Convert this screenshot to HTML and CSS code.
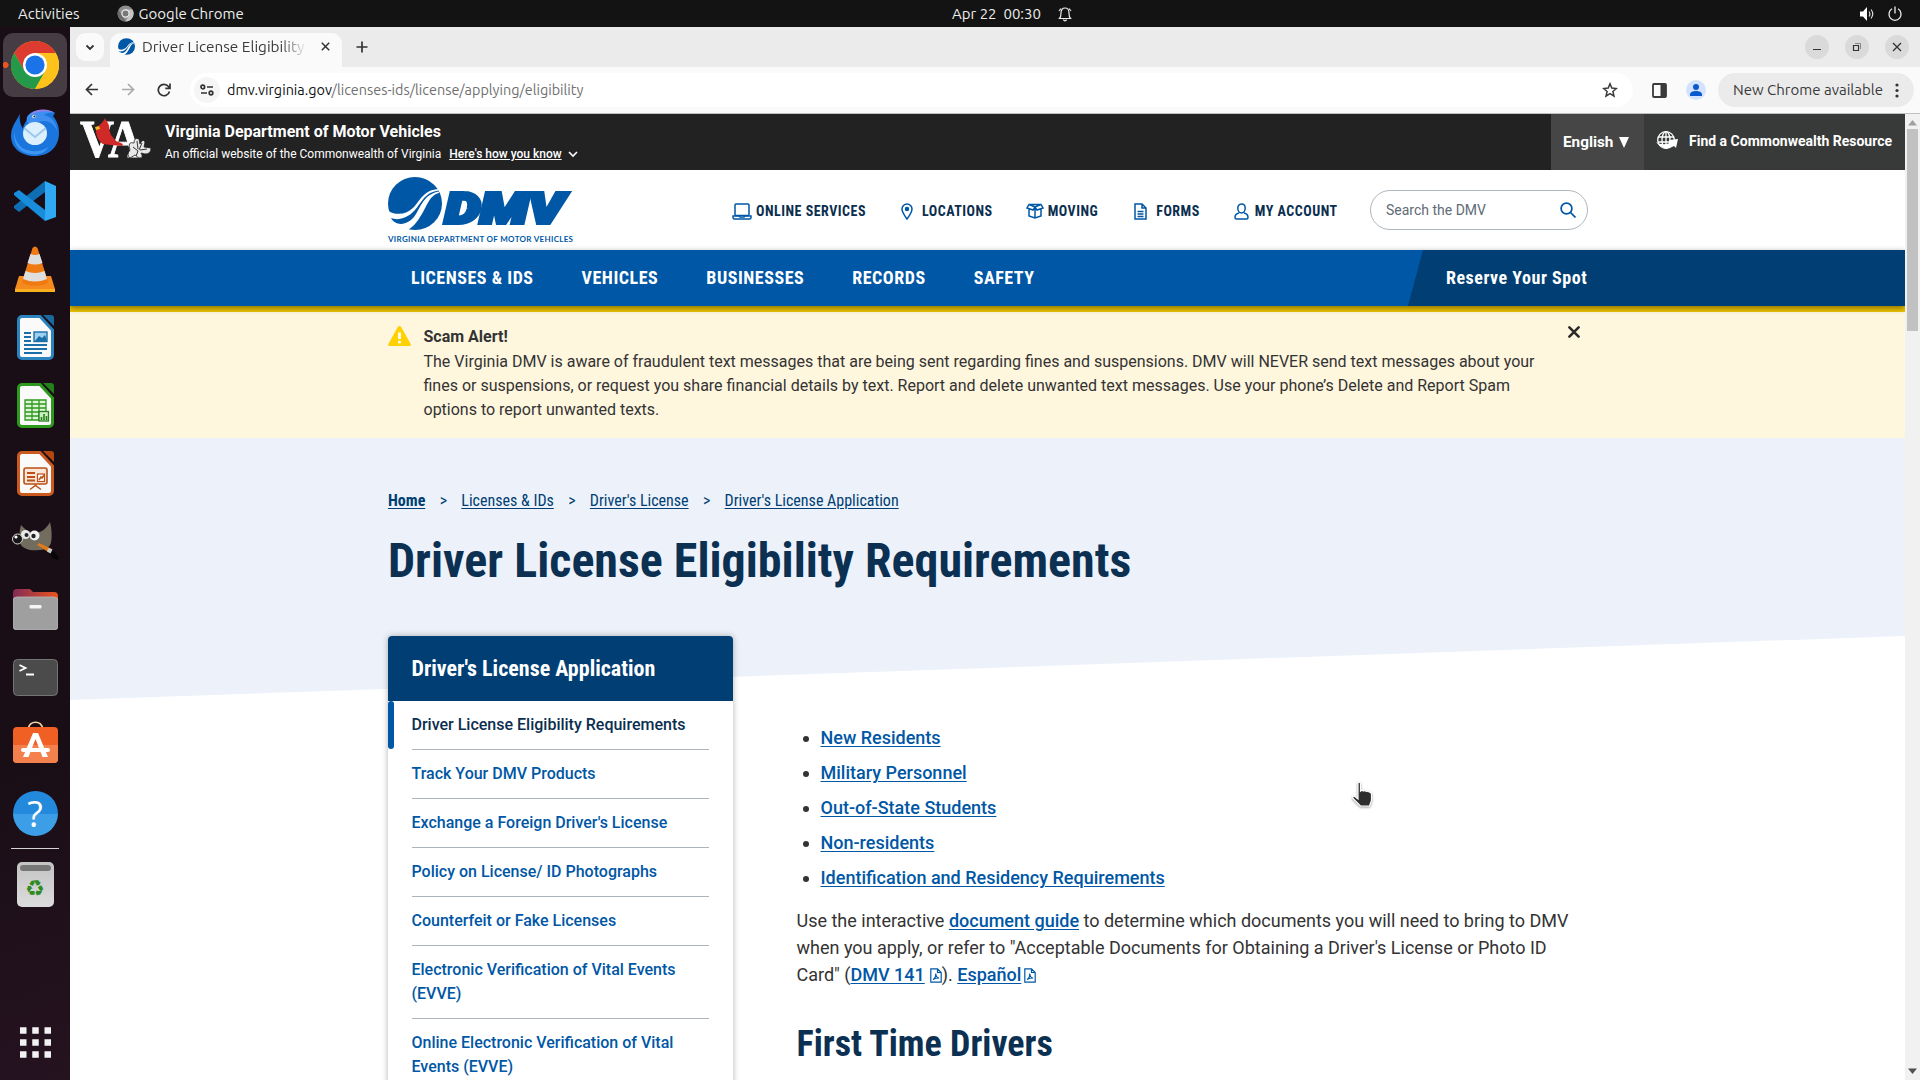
FILE: index.html
```
<!DOCTYPE html>
<html lang="en">
<head>
<meta charset="UTF-8" />
<title>Driver License Eligibility Requirements</title>
<link rel="stylesheet" href="styles.css">
</head>
<body>

<div class="topbar">
  <div class="topbar-left">
    <span>Activities</span>
    <span class="app-name">
      <svg width="17" height="17" viewBox="0 0 17 17"><circle cx="8.5" cy="8.5" r="8" fill="#8d8d8d"/><path d="M8.500 4.500H15.500A8 8 0 0 1 8.500 16.500L12 10.500z" fill="#c4c4c4"/><path d="M1.500 4.800A8 8 0 0 0 8.500 16.500L5 10.500z" fill="#6a6a6a"/><circle cx="8.500" cy="8.500" r="3.600" fill="#777" stroke="#eee" stroke-width="1.200"/></svg>
      Google Chrome
    </span>
  </div>
  <div class="topbar-clock">
    <span>Apr 22&nbsp; 00:30</span>
    <svg width="14" height="16" viewBox="0 0 14 16" fill="none" stroke="#eee" stroke-width="1.200"><path d="M1.500 12.500h11c-1.500-1.500-1.500-3-1.500-5.500 0-3-1.500-5-4-5s-4 2-4 5c0 2.500 0 4-1.500 5.500zM5.500 13.500c.4 1.800 2.600 1.800 3 0M3 2.500L1 5M11 2.500L13 5"/></svg>
  </div>
  <div class="topbar-right">
    <svg width="16" height="16" viewBox="0 0 16 16"><path d="M1 5.500h3l4-4.500v14l-4-4.500H1z" fill="#fff"/><path d="M10 5.500q1.800 2.500 0 5M12 3.500q3.500 4.500 0 9" fill="none" stroke="#ddd" stroke-width="1.200"/></svg>
    <svg width="16" height="16" viewBox="0 0 16 16" fill="none" stroke="#eee" stroke-width="1.300"><path d="M5 2.800a6 6.200 0 1 0 6 0M8 .5v7"/></svg>
  </div>
</div>

<div class="desktop">
  <div class="dock">
    <div class="tile tile-active">
      <svg width="48" height="48" viewBox="0 0 48 48"><circle cx="24" cy="24" r="24" fill="#fbbc04"/><path d="M3.200 12A24 24 0 0 1 44.800 12H24L13.600 30z" fill="#dd3b30"/><path d="M3.200 12A24 24 0 0 0 24 48L34.400 30 24 24 13.600 30z" fill="#24994a"/><path d="M44.800 12A24 24 0 0 1 24 48L34.400 30 24 12z" fill="#fdc21b"/><circle cx="24" cy="24" r="12" fill="#fff"/><circle cx="24" cy="24" r="9.600" fill="#1a73e8"/></svg>
    </div>
    <div class="tile">
      <svg width="50" height="48" viewBox="0 0 50 48"><path d="M10 5C6 12 1 18 1 27c0 12 10 20 24 20s24-9 24-23c0-7-2-12-6-17L45 4C40 1 31 0 25 2c-5 2-7 5-8 8-1 3-4 6-4 10-3-5-4-10-3-15z" fill="#1a75dc"/><path d="M17 8C21 0 35-1 45 4c-4-1-8 0-11 2 8 2 13 8 13 16-2-6-7-10-13-10-7 0-10 3-13 5-3-2-5-5-4-9z" fill="#3f8ff0"/><path d="M20 6C26-1 38-1 45 4c-9-3-17-2-25 2z" fill="#9b7fe8"/><path d="M4 22c1 12 7 19 18 20 8 1 14-2 17-5-5 9-13 9-19 8C8 43 3 34 4 22z" fill="#3f97f2"/><ellipse cx="25" cy="24.500" rx="12" ry="11.500" fill="#dceffd"/><path d="M14 19l11 9 11-9" fill="none" stroke="#9cc7ee" stroke-width="2"/><circle cx="24" cy="7.500" r="1.700" fill="#fff"/><circle cx="24.300" cy="7.500" r="1" fill="#123"/></svg>
    </div>
    <div class="tile">
      <svg width="42" height="42" viewBox="0 0 42 42"><path d="M31 1L42 6v31l-11 4z" fill="#2fa9f3"/><path d="M31 1v11L5 32 0 28V26z" fill="#0f6fb4"/><path d="M31 41V30L5 10 0 13v2z" fill="#178ddb"/></svg>
    </div>
    <div class="tile">
      <svg width="40" height="46" viewBox="0 0 40 46"><path d="M4 30h32l4 13v3H0v-3z" fill="#f58a1f"/><path d="M0 43h40v3H0z" fill="#f8b020"/><path d="M17.500 2q2.500-3 5 0L33 36c-2 5-24 5-26 0z" fill="#ef7a12"/><path d="M15.500 8q4.500 2 9 0l3 9q-7.500 3-15 0zM10.500 25q9.500 4 19 0l2.500 8q-12 5-24 0z" fill="#dedede"/></svg>
    </div>
    <div class="tile">
      <svg width="37" height="45" viewBox="0 0 37 45"><path d="M5 1.500h18L35.500 15v25a3.500 3.500 0 0 1-3.500 3.500H5A3.500 3.500 0 0 1 1.500 40V5A3.500 3.500 0 0 1 5 1.500z" fill="#fafafa" stroke="#2b84bd" stroke-width="3"/><path d="M26 0h8q3 0 3 3v8z" fill="#1a6a9f"/><path d="M7 18h7M7 22h7M7 26h7M7 30h23M7 34h23M7 38h18" stroke="#1a6fa9" stroke-width="2"/><rect x="17" y="17" width="13" height="9.500" fill="#9fd0ef" stroke="#1a6fa9" stroke-width="1.400"/><path d="M18 26l4-5 3 2 3-3 2 6z" fill="#1a6fa9"/></svg>
    </div>
    <div class="tile">
      <svg width="37" height="45" viewBox="0 0 37 45"><path d="M5 1.500h18L35.500 15v25a3.500 3.500 0 0 1-3.500 3.500H5A3.500 3.500 0 0 1 1.500 40V5A3.500 3.500 0 0 1 5 1.500z" fill="#fafafa" stroke="#2e9a1d" stroke-width="3"/><path d="M26 0h8q3 0 3 3v8z" fill="#24801a"/><path d="M8 17h21v20H8zM8 21h21M8 25h21M8 29h21M8 33h21M15 17v20M22 17v20" fill="#dff3d8" stroke="#2e9a1d" stroke-width="1.300"/><rect x="22" y="28.500" width="9.500" height="9.500" fill="#c9efc0" stroke="#24801a" stroke-width="1.300"/><path d="M24.500 37v-3M27 37v-6M29.500 37v-4" stroke="#24801a" stroke-width="1.600"/></svg>
    </div>
    <div class="tile">
      <svg width="37" height="45" viewBox="0 0 37 45"><path d="M5 1.500h18L35.500 15v25a3.500 3.500 0 0 1-3.500 3.500H5A3.500 3.500 0 0 1 1.500 40V5A3.500 3.500 0 0 1 5 1.500z" fill="#fafafa" stroke="#cb5a20" stroke-width="3"/><path d="M26 0h8q3 0 3 3v8z" fill="#b3470f"/><rect x="7" y="17" width="23" height="16" rx="2" fill="#fbe6d8" stroke="#bb5017" stroke-width="1.600"/><path d="M10 22h8M10 26h8M10 29.500h8" stroke="#bb5017" stroke-width="2"/><rect x="20.500" y="23" width="7" height="7.500" fill="#fff" stroke="#bb5017" stroke-width="1.200"/><path d="M22 29l2-3 1 1 2-3M18.500 33v2M13 38.500l5.500-4 5.500 4" fill="none" stroke="#bb5017" stroke-width="1.500"/></svg>
    </div>
    <div class="tile">
      <svg width="48" height="40" viewBox="-1 0 48 40"><path d="M9 4c5 6 10 8 15 8C30 11 35 7 38 1c2 8 2 15 1 21-2 5-6 7-12 7-9 1-15-1-18-5C7 18 7 10 9 4z" fill="#726c5e"/><circle cx="13.500" cy="13.500" r="4.500" fill="#e9e9e9"/><circle cx="14.500" cy="14" r="2" fill="#222"/><circle cx="22.500" cy="14.500" r="5" fill="#f1f1f1"/><circle cx="21.500" cy="15" r="2.200" fill="#222"/><ellipse cx="5.500" cy="18" rx="5" ry="5" fill="#151515" stroke="#ddd" stroke-width="1"/><circle cx="4" cy="16" r="1.600" fill="#fff"/><path d="M27 22l13 6-2 4-13-8z" fill="#e07a1a"/><path d="M39 28l8 8-1 3c-4 0-7-3-9-7z" fill="#060606"/><path d="M36.500 27l4 1.500-2 4-3.500-2z" fill="#ccc"/></svg>
    </div>
    <div class="tile">
      <svg width="45" height="41" viewBox="0 0 45 41"><defs><linearGradient id="fold"><stop offset="0" stop-color="#822b55"/><stop offset="1" stop-color="#e95420"/></linearGradient></defs><path d="M0 12V4q0-4 4-4h13l3 3h21q4 0 4 4v8H0z" fill="url(#fold)"/><rect y="8" width="45" height="33" rx="4" fill="#9f9f9f" stroke="#b9b9b9" stroke-width=".8"/><rect x="16.500" y="16" width="12" height="3.500" rx="1" fill="#f5f5f5"/></svg>
    </div>
    <div class="tile">
      <svg width="45" height="37" viewBox="0 0 45 37"><rect x=".5" y=".5" width="44" height="36" rx="4" fill="#4b4b4b" stroke="#747474"/><path d="M6.500 6l6 3-6 3M13 15.500h8" fill="none" stroke="#fff" stroke-width="1.800"/></svg>
    </div>
    <div class="tile tile-store">
      <svg width="45" height="42" viewBox="0 0 45 42"><path d="M15.500 8c0-9 14-9 14 0" fill="none" stroke="#f5d5a5" stroke-width="1.600"/><rect y="6" width="45" height="36" rx="4" fill="#f06024"/><path d="M0 24h45v14q0 4-4 4H4q-4 0-4-4z" fill="#f4804e"/><path d="M20 12h5l10 24h-5.500L22.500 18l-7 18H10z" fill="#fff"/><rect x="8" y="27" width="29" height="4" rx="2" fill="#fff"/></svg>
    </div>
    <div class="tile">
      <div class="help">?</div>
    </div>
    <div class="dock-sep"></div>
    <div class="tile">
      <div class="trash"><div class="trash-lid"></div>♻</div>
    </div>
    <div class="tile tile-apps">
      <svg width="31" height="31" viewBox="0 0 31 31" stroke="#f2f2f2" stroke-width="6.500" stroke-dasharray="6.500 5.750"><path d="M0 3.500h31M0 15.500h31M0 27.500h31"/></svg>
    </div>
  </div>

  <div class="browser">
    <div class="tabstrip">
      <div class="tab-search">
        <svg width="10" height="7" viewBox="0 0 10 7" fill="none" stroke="#333" stroke-width="1.800"><path d="M1.500 1.500L5 5l3.500-3.500"/></svg>
      </div>
      <div class="tab">
        <svg width="17" height="17" viewBox="0 0 54 53"><use href="#swoosh"/></svg>
        <span class="tab-title">Driver License Eligibility R</span>
        <svg width="9" height="9" viewBox="0 0 9 9" stroke="#333" stroke-width="1.500"><path d="M.8.8l7.400 7.400M8.200.8L.8 8.200"/></svg>
      </div>
      <svg class="tab-new" width="12" height="12" viewBox="0 0 12 12" stroke="#333" stroke-width="1.700"><path d="M6 .5v11M.5 6h11"/></svg>
      <div class="win-buttons">
        <span class="win-btn"><svg width="10" height="10" viewBox="0 0 10 10" stroke="#333"><path d="M1 7.500h8"/></svg></span>
        <span class="win-btn"><svg width="10" height="10" viewBox="0 0 10 10" fill="none" stroke="#333"><path d="M1.500 3.500h5v5h-5z" stroke-width="1.200"/><path d="M3 1.500h5.500V7" stroke="#888"/></svg></span>
        <span class="win-btn"><svg width="10" height="10" viewBox="0 0 10 10" stroke="#333" stroke-width="1.300"><path d="M1 1l8 8M9 1L1 9"/></svg></span>
      </div>
    </div>

    <div class="toolbar">
      <div class="nav-icons">
        <svg width="14" height="13" viewBox="0 0 14 13" fill="none" stroke="#333" stroke-width="1.700"><path d="M13 6.500H1.500M7 1L1.500 6.500 7 12"/></svg>
        <svg width="14" height="13" viewBox="0 0 14 13" fill="none" stroke="#aaa" stroke-width="1.700"><path d="M1 6.500h11.500M7 1l5.500 5.500L7 12"/></svg>
        <svg width="14" height="14" viewBox="0 0 14 14" fill="none" stroke="#333" stroke-width="1.700"><path d="M12.500 8.500A5.700 5.700 0 1 1 11.500 3.500L13 5.200M13 .5v4.800H8.300"/></svg>
      </div>
      <div class="omnibox">
        <span class="site-info"><svg width="14" height="12" viewBox="0 0 14 12" fill="none" stroke="#333" stroke-width="1.700"><circle cx="2.800" cy="3" r="1.800"/><path d="M7 3h6M1 9h6"/><circle cx="11" cy="9" r="1.800"/></svg></span>
        <span class="url"><b>dmv.virginia.gov</b>/licenses-ids/license/applying/eligibility</span>
        <svg width="16" height="16" viewBox="0 0 16 16" fill="none" stroke="#3a3a3a" stroke-width="1.500"><path d="M8 1.800l1.800 4.300 4.600.4-3.500 3 1.100 4.600L8 11.600l-4 2.500 1.100-4.600-3.500-3 4.600-.4z"/></svg>
      </div>
      <svg class="side-panel" width="15" height="15" viewBox="0 0 15 15"><rect x="1" y="1" width="13" height="13" rx="1" fill="none" stroke="#3a3a3a" stroke-width="1.800"/><path d="M8.500 1H14v13H8.500z" fill="#3a3a3a"/></svg>
      <svg class="profile" width="20" height="20" viewBox="0 0 20 20"><circle cx="10" cy="10" r="10" fill="#d3e3fd"/><circle cx="10" cy="7" r="3" fill="#0b57d0"/><path d="M4 16v-1.500C4 12 7 11 10 11s6 1 6 3.500V16z" fill="#0b57d0"/></svg>
      <div class="update-pill"><span>New Chrome available</span>
        <svg width="4" height="15" viewBox="0 0 4 15" fill="#333"><circle cx="2" cy="2" r="1.600"/><circle cx="2" cy="7.500" r="1.600"/><circle cx="2" cy="13" r="1.600"/></svg>
      </div>
    </div>

    <div class="viewport">
      <div class="page">
        <div class="state-banner">
          <svg class="va-logo" width="71" height="44" viewBox="-1 -2 71 44"><text x="-1" y="38" font-family="Liberation Serif" font-weight="bold" font-size="52" textLength="62" lengthAdjust="spacingAndGlyphs" fill="#fff" stroke="#fff" stroke-width=".8">VA</text><path d="M24-1c-1 4-7 7-9 12 0 5 2 11 7 14l8 1 11 1 1-2-7-3-5-6-2-6c1-4-2-7-4-11z" fill="#cf2a27"/><path d="M14 8l4-1 1 3-4 1z" fill="#f2b81c"/><path d="M49 31q-3-9 4-7 0-6 5-4l1 5q3-6 5-2l-1 5 7 1q0 6-6 6l-4-1q3 5-2 5l-4-3-5 3q-4-3 0-8z" fill="#e8e8e8" stroke="#222" stroke-width=".8"/><path d="M52 28l5 4M56 22l1 8M61 24l-3 7M66 30l-7 1M55 37l2-5" stroke="#333" fill="none"/></svg>
          <div class="banner-text">
            <div class="banner-title">Virginia Department of Motor Vehicles</div>
            <div class="banner-sub">An official website of the Commonwealth of Virginia <span class="know">Here's how you know</span>
              <svg width="10" height="7" viewBox="0 0 10 7" fill="none" stroke="#fff" stroke-width="1.600"><path d="M1 1l4 4 4-4"/></svg>
            </div>
          </div>
          <div class="lang">English <svg width="10" height="11" viewBox="0 0 10 11"><path d="M0 0h10L5 11z" fill="#fff"/></svg></div>
          <div class="find">
            <svg width="24" height="20" viewBox="0 0 24 20"><g fill="none" stroke="#fff" stroke-width="1.300"><circle cx="11" cy="9" r="8.300"/><ellipse cx="11" cy="9" rx="4" ry="8.300"/><path d="M11 1v16M3 6h16M3 11h16"/></g><path d="M1 11q6 4 14 1l-1-3 9-1-2 9-2-2Q9 21 1 11z" fill="#fff"/></svg>
            Find a Commonwealth Resource
          </div>
        </div>

        <div class="header">
          <svg class="dmv-logo" width="188" height="70" viewBox="0 0 188 70">
            <g id="swoosh"><ellipse cx="27" cy="26.500" rx="27" ry="26.500" fill="#0057a5"/><path d="M-1 33C8 39 18 38 26 30 33 22 36 13 51 12v4C41 18 38 32 32 40 28 47 24 50 19 54H-1z" fill="#fff"/><path d="M3 41C10 44 20 41 27 33 34 25 37 15 51 13.500v1C37 17 34 27 28 37 20 50 7 49 3 41z" fill="#0057a5"/></g>
            <text x="57" y="46" font-family="Roboto" font-weight="900" font-style="italic" font-size="43" textLength="119" lengthAdjust="spacingAndGlyphs" fill="#0057a5" stroke="#0057a5" stroke-width="4">DMV</text>
            <text x="0" y="65" font-family="Lato" font-weight="bold" font-size="8" textLength="185" lengthAdjust="spacing" fill="#0057a5">VIRGINIA DEPARTMENT OF MOTOR VEHICLES</text>
          </svg>
          <div class="utility">
            <a><svg width="20" height="17" viewBox="0 0 20 17"><rect x="3" y="1" width="14" height="11.500" rx="1"/><path d="M1 13h6l1 1h4l1-1h6v1.500q0 1.500-1.500 1.500h-15Q1 16 1 14.500z"/></svg>ONLINE SERVICES</a>
            <a class="loc"><svg width="12" height="17" viewBox="0 0 12 17"><path d="M6 16C3 12 1 9 1 6a5 5 0 0 1 10 0c0 3-2 6-5 10z"/><circle cx="6" cy="6" r="1.500" fill="#0057a5"/></svg>LOCATIONS</a>
            <a class="moving"><svg width="18" height="16" viewBox="0 0 18 16"><path d="M3 6v7l6 2 6-2V6M9 4v11M3 1.500h12L17 5l-6 2-2-3-2 3-6-2zM3 1.500L9 4l6-2.500"/></svg>MOVING</a>
            <a class="forms"><svg width="13" height="17" viewBox="0 0 13 17"><path d="M1 1h7l4 4v11H1zM8 1v4h4M3.500 8.500h6M3.500 11h6M3.500 13.500h6"/></svg>FORMS</a>
            <a><svg width="15" height="17" viewBox="0 0 15 17"><path d="M7.500 1C5 1 3.800 3 3.800 5c0 3 1.700 5 3.700 5s3.700-2 3.700-5c0-2-1.200-4-3.700-4zM5 10c-2.500.5-4 2-4 4.500 0 1 .5 1.500 1.500 1.500h10c1 0 1.500-.5 1.500-1.500 0-2.500-1.500-4-4-4.500"/></svg>MY ACCOUNT</a>
          </div>
          <div class="search">Search the DMV
            <svg width="16" height="16" viewBox="0 0 16 16" fill="none" stroke="#0057a5" stroke-width="1.700"><circle cx="6.500" cy="6.500" r="5.400"/><path d="M10.500 10.500l5 5"/></svg>
          </div>
        </div>

        <nav class="main-nav">
          <a>LICENSES &amp; IDS</a>
          <a>VEHICLES</a>
          <a>BUSINESSES</a>
          <a>RECORDS</a>
          <a>SAFETY</a>
          <div class="reserve">Reserve Your Spot</div>
        </nav>

        <div class="alert">
          <svg class="alert-icon" width="23" height="20" viewBox="0 0 23 20"><path d="M9.800 1Q11.500-1 13.200 1l9.500 17q.6 2-1.500 2H1.800q-2.100 0-1.500-2z" fill="#ffd100"/><path d="M11.500 6.500v6.500" stroke="#fff" stroke-width="2.800"/><circle cx="11.500" cy="16" r="1.600" fill="#fff"/></svg>
          <div class="alert-text">
            <h3>Scam Alert!</h3>
            <p>The Virginia DMV is aware of fraudulent text messages that are being sent regarding fines and suspensions. DMV will NEVER send text messages about your fines or suspensions, or request you share financial details by text. Report and delete unwanted text messages. Use your phone’s Delete and Report Spam options to report unwanted texts.</p>
          </div>
          <svg class="alert-close" width="12" height="12" viewBox="0 0 12 12" stroke="#2b2b2b" stroke-width="2.600" stroke-linecap="round"><path d="M1.400 1.400l9.200 9.200M10.600 1.400l-9.200 9.200"/></svg>
        </div>

        <div class="hero">
          <div class="crumbs"><a class="home">Home</a><i>&gt;</i><a>Licenses &amp; IDs</a><i>&gt;</i><a>Driver's License</a><i>&gt;</i><a>Driver's License Application</a></div>
          <h1>Driver License Eligibility Requirements</h1>
        </div>

        <div class="content">
          <aside class="sidebar">
            <h2>Driver's License Application</h2>
            <ul>
              <li class="current">Driver License Eligibility Requirements</li>
              <li>Track Your DMV Products</li>
              <li>Exchange a Foreign Driver's License</li>
              <li>Policy on License/ ID Photographs</li>
              <li>Counterfeit or Fake Licenses</li>
              <li>Electronic Verification of Vital Events (EVVE)</li>
              <li>Online Electronic Verification of Vital Events (EVVE)</li>
            </ul>
          </aside>
          <main>
            <ul>
              <li><a>New Residents</a></li>
              <li><a>Military Personnel</a></li>
              <li><a>Out-of-State Students</a></li>
              <li><a>Non-residents</a></li>
              <li><a>Identification and Residency Requirements</a></li>
            </ul>
            <p>Use the interactive <a>document guide</a> to determine which documents you will need to bring to DMV when you apply, or refer to "Acceptable Documents for Obtaining a Driver's License or Photo ID Card" (<a>DMV 141</a><svg class="pdf" width="12" height="15" viewBox="0 0 12 15"><path d="M.8.8h6.700l3.700 3.700v9.700H.8zM7.500.8v3.700h3.700M3 11.500c2-1 3-3.500 2.700-6 .3 3 1.500 4.500 3.500 4.500-2 0-4 .3-6.200 1.500z"/></svg>). <a>Español</a><svg class="pdf pdf-es" width="12" height="15" viewBox="0 0 12 15"><path d="M.8.8h6.700l3.700 3.700v9.700H.8zM7.500.8v3.700h3.700M3 11.500c2-1 3-3.500 2.700-6 .3 3 1.500 4.500 3.500 4.500-2 0-4 .3-6.200 1.500z"/></svg></p>
            <h2>First Time Drivers</h2>
          </main>
        </div>
      </div>

      <div class="scrollbar">
        <svg width="9" height="6" viewBox="0 0 9 6"><path d="M0 5.500L4.500 0 9 5.500z" fill="#a0a0a0"/></svg>
        <div class="thumb"></div>
        <svg width="9" height="6" viewBox="0 0 9 6"><path d="M0 .5h9L4.500 6z" fill="#505050"/></svg>
      </div>
    </div>
  </div>
</div>

<svg class="pointer" width="22" height="28" viewBox="0 0 22 28"><path d="M7 1.500q2-1 2.500 1V10q1.500-1.500 3 0 1.500-1 3 .5 1.500-.8 2.500.5 2 0 2.500 2v6.500l-2 5.500h-9L3 18.500q-2-2-1-3 1-1 2.500.5L7 18z" fill="#2e2e2e" stroke="#fff" stroke-width="1.200"/></svg>

</body>
</html>
```
FILE: styles.css
```
* { box-sizing: border-box; }
body { margin: 0; width: 1920px; height: 1080px; overflow: hidden; font-family: Roboto, "Liberation Sans", sans-serif; color: #2b2b2b; background: #1b0f17; }
svg { flex: none; display: block; }
h1, h2, h3, p, ul { margin: 0; padding: 0; }

/* desktop shell */
.topbar { display: grid; grid-template-columns: 1fr auto 1fr; align-items: center; height: 27px; background: #131313; color: #ececec; font: 15px/27px Ubuntu, "Open Sans", sans-serif; }
.topbar-left { display: flex; padding-left: 18px; gap: 37px; }
.app-name { display: flex; align-items: center; gap: 5px; }
.topbar-clock { display: flex; align-items: center; gap: 17px; margin-left: 104px; }
.topbar-right { display: flex; justify-content: flex-end; gap: 12px; padding-right: 17px; }
.desktop { display: flex; height: 1053px; }
.dock { width: 70px; display: flex; flex-direction: column; align-items: center; padding: 6px 0; background: linear-gradient(160deg, #1a0e16 70%, #251320); }
.tile { width: 64px; height: 64px; margin-bottom: 4px; display: flex; align-items: center; justify-content: center; border-radius: 10px; flex: none; }
.tile-active { background: radial-gradient(circle at 2.500px 50%, #e95420 2.800px, transparent 3.300px), #463c43; }
.tile-store { padding-bottom: 6px; }
.tile-apps { margin-top: auto; margin-bottom: 0; }
.dock-sep { width: 48px; height: 1px; background: #d6d3d5; margin: -1px 0 3px; flex: none; }
.help { width: 45px; height: 45px; border-radius: 50%; background: linear-gradient(#2389dd 52%, #3c9ee6 52%); color: #fff; font: 36px/45px "Open Sans", sans-serif; text-align: center; }
.trash { width: 37px; height: 45px; border-radius: 5px; background: linear-gradient(#c3c3c3, #dcdcdc); color: #2c8a1e; font: 22px/26px "DejaVu Sans", sans-serif; text-align: center; padding-top: 3px; }
.trash-lid { height: 6px; margin: 0 3px 5px; border-radius: 3px; background: #777; }

/* browser window */
.browser { flex: 1; display: flex; flex-direction: column; font-family: Ubuntu, "Open Sans", sans-serif; font-size: 15px; color: #3a3a3a; }
.tabstrip { height: 40px; background: #ebebeb; display: flex; align-items: center; padding: 0 11px 0 6px; }
.tab-search { width: 28px; height: 28px; border-radius: 9px; background: #fafafa; display: flex; align-items: center; justify-content: center; }
.tab { width: 232px; height: 34px; margin: 6px 0 0 6px; padding: 0 12px 7px 8px; background: #fafafa; border-radius: 11px 11px 0 0; display: flex; align-items: center; gap: 7px; }
.tab-title { flex: 1; overflow: hidden; white-space: nowrap; font-size: 15.300px; -webkit-mask-image: linear-gradient(90deg, #000 84%, transparent); mask-image: linear-gradient(90deg, #000 84%, transparent); margin-right: 7px; }
.tab-new { margin-left: 14px; }
.win-buttons { margin-left: auto; display: flex; gap: 16px; }
.win-btn { width: 24px; height: 24px; border-radius: 50%; background: #dadada; display: flex; align-items: center; justify-content: center; }
.toolbar { height: 47px; background: #fafafa; border-bottom: 1px solid #bdbfc1; display: flex; align-items: center; padding: 0 6px 0 15px; }
.nav-icons { display: flex; gap: 22px; width: 105px; }
.omnibox { width: 1443px; height: 34px; border-radius: 17px; background: #fff; display: flex; align-items: center; padding: 0 15px 0 4px; }
.site-info { width: 26px; height: 26px; border-radius: 50%; background: #f5f5f5; display: flex; align-items: center; justify-content: center; margin-right: 7px; }
.url { flex: 1; font-size: 14.400px; color: #707070; }
.url b { font-weight: normal; color: #111; }
.side-panel { margin-left: 19px; }
.profile { margin: 0 12px 0 19px; }
.update-pill { width: 196px; height: 34px; border-radius: 17px; background: #ebebeb; display: flex; align-items: center; justify-content: space-between; padding: 0 15px; white-space: nowrap; }
.update-pill span { padding-bottom: 2px; }

.viewport { flex: 1; display: flex; overflow: hidden; background: #fff; font-family: Roboto, "Liberation Sans", sans-serif; }
.page { width: 1835px; height: 966px; overflow: hidden; color: #333; }
.scrollbar { width: 15px; background: #f1f1f1; display: flex; flex-direction: column; align-items: center; padding: 6px 0; }
.thumb { width: 11px; height: 202px; background: #c1c1c1; margin: 3px 0 auto; }

/* state banner */
.state-banner { height: 56px; background: #222; color: #fff; display: flex; }
.va-logo { margin: 3px 0 0 10px; }
.banner-text { margin-left: 14px; padding-top: 8px; }
.banner-title { font: bold 16px/20px Roboto; }
.banner-sub { font-size: 12px; line-height: 24px; display: flex; align-items: center; }
.banner-sub svg { margin-left: 6px; }
.know { font-weight: 500; text-decoration: underline; margin-left: 8px; }
.lang { margin-left: auto; width: 93px; background: #464646; display: flex; align-items: center; padding-left: 12px; gap: 6px; font: bold 15.300px Roboto; }
.find { width: 261px; background: #383a39; display: flex; align-items: center; padding: 0 0 2px 11px; gap: 10px; font: bold 14px Roboto; }

/* site header */
.header { height: 80px; background: #fff; display: flex; align-items: center; padding-left: 318px; }
.dmv-logo { margin-top: 4px; }
.utility { display: flex; margin-left: 156px; padding-top: 2px; width: 638px; color: #0b2e4f; font: bold 14px "Roboto Condensed", Roboto; letter-spacing: .5px; }
.utility a { display: flex; align-items: center; white-space: nowrap; margin-right: 34px; gap: 9px; }
.utility svg { fill: none; stroke: #0057a5; stroke-width: 1.500; }
.utility a:nth-child(odd) { gap: 4px; }
.utility a:last-child { gap: 6px; margin: 0; }
.utility .loc { margin-left: 1px; margin-right: 33px; }
.utility .forms { margin-left: 2px; }
.search { width: 218px; height: 40px; border: 1px solid #aeb6be; border-radius: 20px; display: flex; align-items: center; justify-content: space-between; padding: 0 11px 0 15px; font-size: 14px; color: #5f6b76; }
.main-nav { height: 56px; background: #0057a5; display: flex; align-items: center; gap: 48px; padding-left: 341px; color: #fff; font: bold 18px "Roboto Condensed", Roboto; letter-spacing: .52px; position: relative; box-shadow: 0 2px 6px rgba(0,0,0,.45); }
.main-nav a { padding-bottom: 2px; }
.reserve { margin-left: auto; width: 497px; height: 56px; line-height: 56px; padding-left: 38px; background: #003e73; clip-path: polygon(15px 0, 100% 0, 100% 100%, 0 100%); }

.alert { height: 132px; border-top: 6px solid #edc400; background: #fff6de; display: flex; padding: 12px 0 0 318px; font-size: 16px; line-height: 24px; }
.alert-icon { margin-top: 2px; }
.alert-text { width: 1124px; margin-left: 12.500px; }
.alert h3 { font-size: 16px; padding-top: 1px; margin-bottom: 1px; }
.alert-close { margin: 2px 0 0 20px; }

/* title band, its slanted lower edge runs behind the sidebar */
.hero { height: 262px; padding: 51px 0 0 318px; margin-bottom: -64px; background: #edf2fa; clip-path: polygon(0 0, 100% 0, 100% 198px, 0 100%); }
.crumbs { font: 16px/24px "Roboto Condensed", Roboto; color: #003e73; display: flex; }
.crumbs a { text-decoration: underline; text-underline-offset: 2px; }
.crumbs i { font-style: normal; width: 36px; text-align: center; }
.home { font-weight: bold; }
h1 { margin-top: 19px; font: bold 48px/58px "Roboto Condensed", Roboto; color: #0b3052; }

.content { display: flex; padding-left: 317.500px; position: relative; }
.sidebar { width: 345px; height: 500px; background: #fff; border-radius: 4px; box-shadow: 0 0 6px rgba(0,0,0,.3); }
.sidebar h2 { height: 65px; padding-left: 24px; border-radius: 4px 4px 0 0; background: #003e73; color: #fff; font: bold 22px/65px "Roboto Condensed", Roboto; }
.sidebar ul { list-style: none; }
.sidebar li { margin: 0 24px; padding: 12px 0; border-bottom: 1px solid #adb4bb; font: 500 16px/24px Roboto; color: #0057a5; position: relative; }
.sidebar .current { color: #0b2e4f; }
.sidebar .current::before { content: ""; position: absolute; left: -24px; top: 0; width: 6px; height: 48px; border-radius: 3px; background: #0057a5; }
main { width: 792px; margin-left: 64px; padding-top: 88px; font-size: 18px; line-height: 27px; }
main ul { padding-left: 24px; margin-bottom: 16px; }
main li { margin-bottom: 8px; }
main li:last-child { margin-bottom: 0; }
main a { color: #0057a5; font-weight: 500; text-decoration: underline; text-underline-offset: 2px; }
main h2 { margin-top: 31px; font: bold 36px/50px "Roboto Condensed", Roboto; color: #0b3052; }
.pdf { display: inline-block; margin-left: 5px; vertical-align: -2px; fill: none; stroke: #0057a5; stroke-width: 1.200; }
.pdf-es { margin-left: 3px; }

.pointer { position: absolute; left: 1351px; top: 781px; filter: drop-shadow(0 1px 1px rgba(0,0,0,.4)); }
```
